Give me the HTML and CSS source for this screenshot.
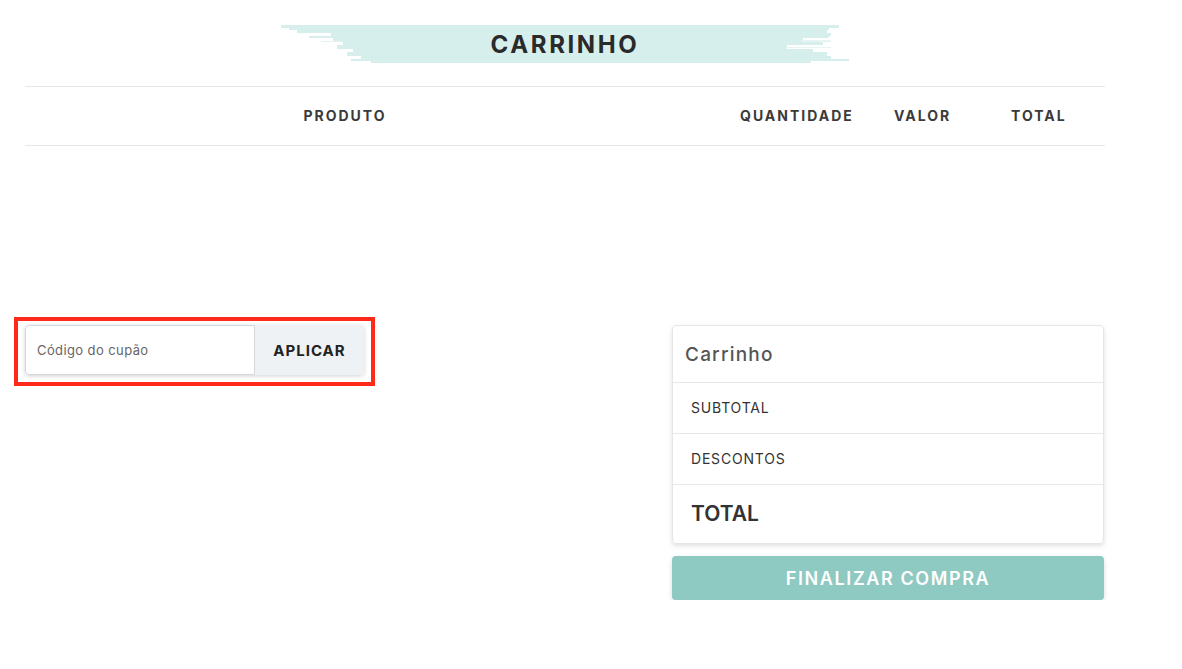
FILE: index.html
```html
<!DOCTYPE html>
<html lang="pt">
<head>
    <title>Carrinho</title>
    <meta charset="UTF-8" />
    <meta name="viewport" content="width=device-width" />
    <link rel="stylesheet" href="styles.css">
</head>
<body>
    <main class="cart-page">
        <div class="page-title">
            <svg class="brush" viewBox="0 0 568 38" preserveAspectRatio="none" aria-hidden="true">
                <g fill="#d7efec">
                    <rect x="0" y="0" width="558" height="3"/>
                    <rect x="8" y="3" width="540" height="2"/>
                    <rect x="16" y="5" width="530" height="3"/>
                    <rect x="50" y="8" width="500" height="3"/>
                    <rect x="28" y="11" width="520" height="2"/>
                    <rect x="52" y="13" width="470" height="4"/>
                    <rect x="62" y="17" width="480" height="3"/>
                    <rect x="56" y="20" width="450" height="4"/>
                    <rect x="72" y="24" width="460" height="3"/>
                    <rect x="66" y="27" width="480" height="4"/>
                    <rect x="80" y="31" width="470" height="3"/>
                    <rect x="70" y="34" width="498" height="2"/>
                    <rect x="90" y="36" width="440" height="2"/>
                </g>
                <g fill="#e6f5f3">
                    <rect x="520" y="15" width="30" height="2"/>
                    <rect x="505" y="22" width="45" height="1"/>
                    <rect x="40" y="16" width="20" height="1"/>
                </g>
            </svg>
            <h1>CARRINHO</h1>
        </div>

        <div class="table-head">
            <span class="col-product">PRODUTO</span>
            <span>QUANTIDADE</span>
            <span>VALOR</span>
            <span>TOTAL</span>
        </div>

        <div class="cart-bottom">
            <div class="coupon-highlight">
                <form class="coupon">
                    <input type="text" placeholder="Código do cupão" />
                    <button type="button">APLICAR</button>
                </form>
            </div>

            <div class="summary">
                <div class="summary-card">
                    <div class="summary-title">Carrinho</div>
                    <div class="summary-row">SUBTOTAL</div>
                    <div class="summary-row">DESCONTOS</div>
                    <div class="summary-row summary-total">TOTAL</div>
                </div>
                <button class="checkout">FINALIZAR COMPRA</button>
            </div>
        </div>
    </main>
</body>
</html>
```

FILE: styles.css
```css
body {
    margin: 0;
    font-family: Inter, "Noto Sans", sans-serif;
    color: #333;
    background: #fff;
}
.cart-page {
    width: 1080px;
    margin-left: 25px;
    padding-top: 25px;
}
.page-title {
    position: relative;
    width: 568px;
    height: 38px;
    margin: 0 auto;
    display: flex;
    align-items: center;
    justify-content: center;
}
.brush {
    position: absolute;
    left: 0;
    top: 0;
    width: 100%;
    height: 100%;
}
.page-title h1 {
    position: relative;
    margin: 0;
    font-size: 24px;
    font-weight: 700;
    letter-spacing: 2.6px;
    color: #2a2a2a;
}
.table-head {
    margin-top: 23px;
    height: 60px;
    box-sizing: border-box;
    padding-bottom: 2px;
    border-top: 1px solid #e8e8e8;
    border-bottom: 1px solid #e8e8e8;
    display: grid;
    grid-template-columns: 715px 154px 117px 1fr;
    align-items: center;
    font-size: 14px;
    font-weight: 700;
    letter-spacing: 2px;
    color: #3a3a3a;
}
.col-product {
    text-align: center;
    padding-right: 75px;
}
.cart-bottom {
    margin-top: 171px;
    display: flex;
    justify-content: space-between;
    align-items: flex-start;
}
.coupon-highlight {
    margin-left: -11px;
    border: 4px solid #ff2a1a;
    padding: 4px 7px 7px 7px;
}
.coupon {
    display: flex;
    width: 339px;
    height: 50px;
    border-radius: 4px;
    box-shadow: 0 1px 4px rgba(0, 0, 0, 0.18);
    overflow: hidden;
}
.coupon input {
    width: 230px;
    box-sizing: border-box;
    border: 1px solid #d4d8dc;
    border-radius: 4px 0 0 4px;
    padding: 0 11px;
    font-family: inherit;
    font-size: 13px;
    letter-spacing: 0.4px;
    color: #555;
    outline: none;
}
.coupon input::placeholder {
    color: #666;
}
.coupon button {
    flex: 1;
    border: none;
    background: #eef2f4;
    font-family: inherit;
    font-size: 15px;
    font-weight: 700;
    letter-spacing: 1px;
    color: #222;
}
.summary {
    width: 432px;
    margin-top: 8px;
    margin-right: 1px;
}
.summary-card {
    border: 1px solid #e6e6e6;
    border-radius: 4px;
    box-shadow: 0 2px 5px rgba(0, 0, 0, 0.12);
}
.summary-title {
    height: 56px;
    display: flex;
    align-items: center;
    padding-left: 12px;
    font-size: 19px;
    font-weight: 500;
    letter-spacing: 1.2px;
    color: #555;
    border-bottom: 1px solid #e8e8e8;
}
.summary-row {
    height: 48px;
    padding-bottom: 2px;
    display: flex;
    align-items: center;
    padding-left: 18px;
    font-size: 14px;
    letter-spacing: 0.8px;
    color: #333;
    border-bottom: 1px solid #e8e8e8;
}
.summary-row.summary-total {
    height: 56px;
    border-bottom: none;
    font-size: 21px;
    font-weight: 600;
    letter-spacing: 0;
}
.checkout {
    margin-top: 12px;
    width: 100%;
    height: 44px;
    border: none;
    border-radius: 4px;
    background: #8ec9c2;
    color: #fff;
    font-family: inherit;
    font-size: 18px;
    font-weight: 600;
    letter-spacing: 1.6px;
    box-shadow: 0 2px 5px rgba(0, 0, 0, 0.15);
}
```
